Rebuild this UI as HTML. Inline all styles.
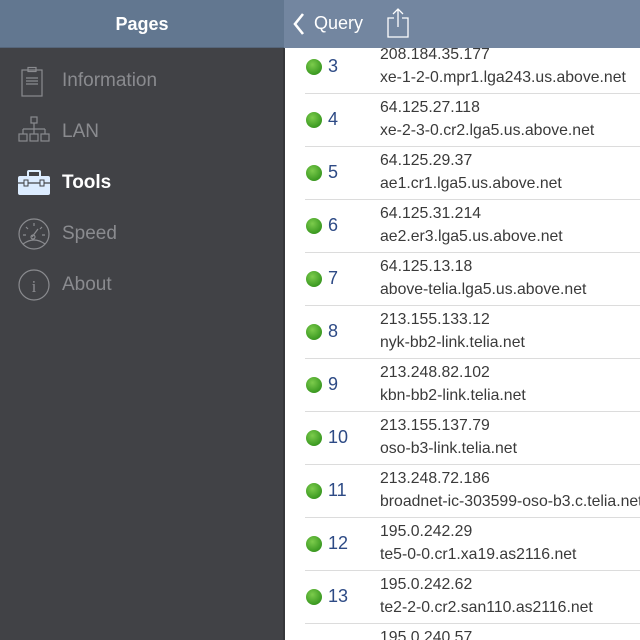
<!DOCTYPE html>
<html><head><style>
*{margin:0;padding:0;box-sizing:border-box}
html,body{width:640px;height:640px;overflow:hidden}
body{position:relative;font-family:"Liberation Sans",sans-serif;background:#fff}
.side{position:absolute;left:0;top:0;width:284px;height:640px;background:#414246}
.sh{position:absolute;left:0;top:0;width:284px;height:48px;background:#627790;color:#fff;font-weight:bold;font-size:18px;text-align:center;line-height:48px;border-bottom:1px solid #55657a}
.rh{position:absolute;left:284px;top:0;width:356px;height:48px;background:#7386a0}
.item{position:absolute;left:62px;font-size:19px;color:#8a8b8f;line-height:20px}
.ic{position:absolute;left:18px}
.row{position:absolute;left:305px;width:335px;height:53px;border-bottom:1px solid #dcdcdc;overflow:hidden}
.dot{position:absolute;left:1px;top:18px;width:16px;height:16px;border-radius:50%;background:radial-gradient(circle at 40% 35%,#7ccc4c,#3c9a22 70%,#2f7f1a)}
.n{position:absolute;left:23px;top:15px;font-size:18px;color:#2d4a85}
.a{position:absolute;left:75px;top:5px;font-size:15.8px;color:#3a3a3a;white-space:nowrap}
.b{position:absolute;left:75px;top:28px;font-size:15.8px;color:#3a3a3a;white-space:nowrap}
.divl{position:absolute;left:283px;top:48px;width:2px;height:592px;background:#36373a}
</style></head><body>
<div class="side">
<div class="sh">Pages</div>
<svg class="ic" style="top:66px" width="28" height="32" viewBox="0 0 28 32" fill="none" stroke="#8a8b8f" stroke-width="1.2"><rect x="4" y="4" width="20" height="26"/><rect x="10" y="1.5" width="8" height="4"/><path d="M8 12h12M8 15h12M8 18h12"/></svg>
<div class="item" style="top:71px">Information</div>
<svg class="ic" style="top:116px" width="32" height="32" viewBox="0 0 32 32" fill="none" stroke="#8a8b8f" stroke-width="1.2"><rect x="13" y="1" width="6" height="6"/><path d="M16 7v6M5 13h22M5 13v5M16 13v5M27 13v5"/><rect x="1" y="18" width="8" height="7"/><rect x="12" y="18" width="8" height="7"/><rect x="23" y="18" width="8" height="7"/></svg>
<div class="item" style="top:122px">LAN</div>
<svg class="ic" style="top:170px" width="32" height="26" viewBox="0 0 32 26"><rect x="10" y="1" width="12" height="6" rx="1" fill="none" stroke="#ddeeff" stroke-width="2"/><rect x="0" y="6" width="32" height="19" rx="2" fill="#dcecff"/><path d="M0 13h32" stroke="#414246" stroke-width="1.2"/><rect x="6" y="10" width="4" height="6" fill="#dcecff" stroke="#414246"/><rect x="22" y="10" width="4" height="6" fill="#dcecff" stroke="#414246"/></svg>
<div class="item" style="top:173px;color:#fff;font-weight:bold">Tools</div>
<svg class="ic" style="top:218px" width="32" height="32" viewBox="0 0 32 32" fill="none" stroke="#8a8b8f" stroke-width="1.2"><circle cx="16" cy="16" r="15"/><path d="M5 26q11-8 22 0M16 5v3M8 9l2 2M24 9l-2 2M5 17h3M27 17h-3M14 19l6-8"/><circle cx="15" cy="19" r="2"/></svg>
<div class="item" style="top:224px">Speed</div>
<svg class="ic" style="top:269px" width="32" height="32" viewBox="0 0 32 32" fill="none" stroke="#8a8b8f" stroke-width="1.2"><circle cx="16" cy="16" r="15"/><text x="16" y="23" text-anchor="middle" font-family="Liberation Serif" font-size="17" fill="#8a8b8f" stroke="none">i</text></svg>
<div class="item" style="top:275px">About</div>
</div>
<div class="divl"></div>
<div class="rh">
<svg style="position:absolute;left:8px;top:12px" width="14" height="24" viewBox="0 0 14 24" fill="none" stroke="#fff" stroke-width="2.6"><path d="M11 2L3 12l8 10"/></svg>
<div style="position:absolute;left:30px;top:13px;color:#fff;font-size:18px">Query</div>
<svg style="position:absolute;left:101px;top:7px" width="26" height="32" viewBox="0 0 26 32" fill="none" stroke="#fff" stroke-width="1.3"><path d="M9 11H3v19h20V11h-6M13 2v18M8 7l5-5 5 5"/></svg>
</div>
<div class="row" style="top:41px"><div class="dot"></div><div class="n">3</div><div class="a">208.184.35.177</div><div class="b">xe-1-2-0.mpr1.lga243.us.above.net</div></div>
<div class="row" style="top:94px"><div class="dot"></div><div class="n">4</div><div class="a">64.125.27.118</div><div class="b">xe-2-3-0.cr2.lga5.us.above.net</div></div>
<div class="row" style="top:147px"><div class="dot"></div><div class="n">5</div><div class="a">64.125.29.37</div><div class="b">ae1.cr1.lga5.us.above.net</div></div>
<div class="row" style="top:200px"><div class="dot"></div><div class="n">6</div><div class="a">64.125.31.214</div><div class="b">ae2.er3.lga5.us.above.net</div></div>
<div class="row" style="top:253px"><div class="dot"></div><div class="n">7</div><div class="a">64.125.13.18</div><div class="b">above-telia.lga5.us.above.net</div></div>
<div class="row" style="top:306px"><div class="dot"></div><div class="n">8</div><div class="a">213.155.133.12</div><div class="b">nyk-bb2-link.telia.net</div></div>
<div class="row" style="top:359px"><div class="dot"></div><div class="n">9</div><div class="a">213.248.82.102</div><div class="b">kbn-bb2-link.telia.net</div></div>
<div class="row" style="top:412px"><div class="dot"></div><div class="n">10</div><div class="a">213.155.137.79</div><div class="b">oso-b3-link.telia.net</div></div>
<div class="row" style="top:465px"><div class="dot"></div><div class="n">11</div><div class="a">213.248.72.186</div><div class="b">broadnet-ic-303599-oso-b3.c.telia.net</div></div>
<div class="row" style="top:518px"><div class="dot"></div><div class="n">12</div><div class="a">195.0.242.29</div><div class="b">te5-0-0.cr1.xa19.as2116.net</div></div>
<div class="row" style="top:571px"><div class="dot"></div><div class="n">13</div><div class="a">195.0.242.62</div><div class="b">te2-2-0.cr2.san110.as2116.net</div></div>
<div class="row" style="top:624px;height:16px;border:none"><div class="a">195.0.240.57</div></div>
</body></html>
